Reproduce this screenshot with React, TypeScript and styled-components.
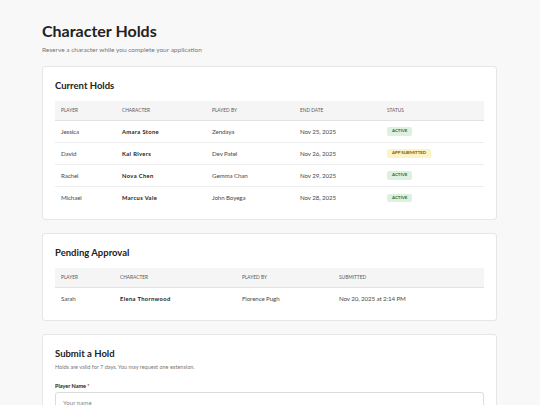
import React from "react";
import styled, { createGlobalStyle } from "styled-components";

const Global = createGlobalStyle`
  html, body { margin: 0; padding: 0; background: #f8f8f8; }
  body { font-family: "Lato", "Noto Sans", sans-serif; color: #222; }
  * { box-sizing: border-box; }
`;

const Page = styled.div`
  padding: 21px 43px 0 42px;
  display: flex;
  flex-direction: column;
`;

const Title = styled.h1`
  margin: 0;
  font-size: 16px;
  line-height: 20px;
  font-weight: 700;
  color: #222;
`;

const Subtitle = styled.p`
  margin: 4px 0 0;
  font-size: 6.5px;
  line-height: 9px;
  color: #777;
`;

const Card = styled.section<{ $mt: number }>`
  background: #fff;
  border: 1px solid #e6e6e6;
  border-radius: 3px;
  padding: 13px 12px 11px;
  margin-top: ${(p) => p.$mt}px;
`;

const CardTitle = styled.h2`
  margin: 0;
  font-size: 9.5px;
  line-height: 12px;
  font-weight: 700;
  color: #222;
`;

const CardNote = styled.p`
  margin: 3px 0 0;
  font-size: 5.5px;
  line-height: 8px;
  color: #777;
`;

const Table = styled.table`
  width: 100%;
  border-collapse: collapse;
  margin-top: 9px;
  table-layout: fixed;
`;

const Th = styled.th<{ $w?: number }>`
  width: ${(p) => (p.$w ? `${p.$w}px` : "auto")};
  background: #f5f5f5;
  text-align: left;
  font-size: 4.8px;
  font-weight: 400;
  color: #5a5a5a;
  text-transform: uppercase;
  height: 19px;
  padding: 0 6px;
  border-bottom: 1.5px solid #e2e2e2;
`;

const Tr = styled.tr`
  & + & td { border-top: 1px solid #eeeeee; }
`;

const Td = styled.td<{ $bold?: boolean }>`
  height: 22px;
  padding: 0 6px;
  font-size: ${(p) => (p.$bold ? "5.8px" : "6.2px")};
  letter-spacing: ${(p) => (p.$bold ? "0.35px" : "-0.1px")};
  color: ${(p) => (p.$bold ? "#222" : "#4a4a4a")};
  font-weight: ${(p) => (p.$bold ? 700 : 400)};
  white-space: nowrap;
`;

const Badge = styled.span<{ $kind: "active" | "submitted" }>`
  display: inline-block;
  padding: 2px 5px;
  border-radius: 2px;
  font-size: 4.5px;
  line-height: 4.5px;
  font-weight: 700;
  text-transform: uppercase;
  background: ${(p) => (p.$kind === "active" ? "#dcf1df" : "#fdf3c6")};
  color: ${(p) => (p.$kind === "active" ? "#2f6b3b" : "#7a5e08")};
`;

const Label = styled.label`
  display: block;
  margin-top: 12px;
  font-size: 5.5px;
  font-weight: 700;
  color: #222;
`;

const Req = styled.span`
  color: #c44;
`;

const Input = styled.input`
  display: block;
  width: 100%;
  margin-top: 3px;
  height: 20px;
  border: 1px solid #dcdcdc;
  border-radius: 3px;
  padding: 0 7px;
  font-family: inherit;
  font-size: 6.2px;
  color: #222;
  &::placeholder { color: #888; }
`;

const holds = [
  { player: "Jessica", character: "Amara Stone", by: "Zendaya", end: "Nov 25, 2025", status: "active" as const },
  { player: "David", character: "Kai Rivers", by: "Dev Patel", end: "Nov 26, 2025", status: "submitted" as const },
  { player: "Rachel", character: "Nova Chen", by: "Gemma Chan", end: "Nov 29, 2025", status: "active" as const },
  { player: "Michael", character: "Marcus Vale", by: "John Boyega", end: "Nov 28, 2025", status: "active" as const },
];

export default function App() {
  return (
    <>
      <Global />
      <Page>
        <Title>Character Holds</Title>
        <Subtitle>Reserve a character while you complete your application</Subtitle>

        <Card $mt={12}>
          <CardTitle>Current Holds</CardTitle>
          <Table>
            <thead>
              <tr>
                <Th $w={61}>Player</Th>
                <Th $w={90}>Character</Th>
                <Th $w={88}>Played By</Th>
                <Th $w={87}>End Date</Th>
                <Th>Status</Th>
              </tr>
            </thead>
            <tbody>
              {holds.map((h) => (
                <Tr key={h.player}>
                  <Td>{h.player}</Td>
                  <Td $bold>{h.character}</Td>
                  <Td>{h.by}</Td>
                  <Td>{h.end}</Td>
                  <Td>
                    <Badge $kind={h.status}>{h.status === "active" ? "Active" : "App Submitted"}</Badge>
                  </Td>
                </Tr>
              ))}
            </tbody>
          </Table>
        </Card>

        <Card $mt={13}>
          <CardTitle>Pending Approval</CardTitle>
          <Table>
            <thead>
              <tr>
                <Th $w={59}>Player</Th>
                <Th $w={122}>Character</Th>
                <Th $w={97}>Played By</Th>
                <Th>Submitted</Th>
              </tr>
            </thead>
            <tbody>
              <Tr>
                <Td>Sarah</Td>
                <Td $bold>Elena Thornwood</Td>
                <Td>Florence Pugh</Td>
                <Td>Nov 20, 2025 at 2:14 PM</Td>
              </Tr>
            </tbody>
          </Table>
        </Card>

        <Card $mt={13}>
          <CardTitle>Submit a Hold</CardTitle>
          <CardNote>Holds are valid for 7 days. You may request one extension.</CardNote>
          <Label>
            Player Name <Req>*</Req>
          </Label>
          <Input placeholder="Your name" />
        </Card>
      </Page>
    </>
  );
}
